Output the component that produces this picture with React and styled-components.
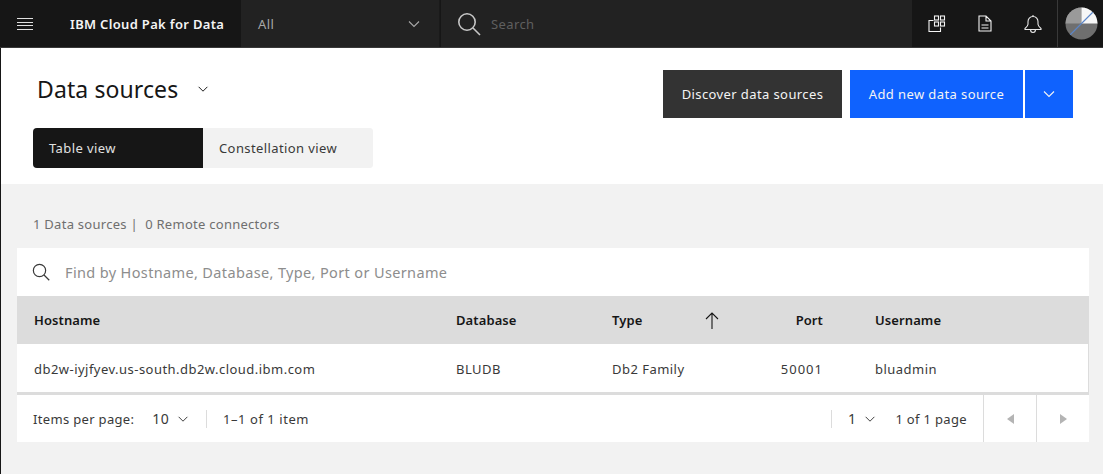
import React from "react";
import styled, { createGlobalStyle } from "styled-components";

const GlobalStyle = createGlobalStyle`
  html, body {
    margin: 0;
    padding: 0;
    background: #f2f2f2;
    font-family: "Noto Sans", "Liberation Sans", sans-serif;
    color: #161616;
  }
  * { box-sizing: border-box; }
`;

const Page = styled.div`
  width: 1103px;
  height: 474px;
  overflow: hidden;
  display: flex;
  flex-direction: column;
  letter-spacing: 0.4px;
`;

const TopBar = styled.header`
  height: 48px;
  display: flex;
  background: #161616;
  border-bottom: 1px solid #393939;
  flex-shrink: 0;
`;

const MenuButton = styled.div`
  width: 51px;
  display: flex;
  align-items: center;
  justify-content: center;
  padding-right: 1px;
`;

const Brand = styled.div`
  width: 190px;
  padding-left: 19px;
  display: flex;
  align-items: center;
  color: #f4f4f4;
  font-size: 13px;
  font-weight: 600;
  letter-spacing: 0.32px;
`;

const ScopeSelect = styled.div`
  width: 199px;
  background: #222;
  display: flex;
  align-items: center;
  justify-content: space-between;
  padding: 0 17px 0 17px;
  color: #a8a8a8;
  font-size: 13px;
  border-right: 1px solid #1a1a1a;
`;

const SearchBar = styled.div`
  width: 471px;
  margin-left: 1px;
  background: #222;
  display: flex;
  align-items: center;
  gap: 10px;
  padding-left: 16px;
  color: #5f5f5f;
  font-size: 13px;
`;

const IconGroup = styled.div`
  flex: 1;
  display: flex;
  align-items: center;
  padding-left: 1px;
`;

const HeaderIcon = styled.div`
  width: 48px;
  height: 47px;
  display: flex;
  align-items: center;
  justify-content: center;
`;

const AvatarSlot = styled.div`
  flex: 1;
  height: 47px;
  border-left: 1px solid #393939;
  display: flex;
  align-items: center;
  justify-content: center;
  padding-left: 1px;
`;

const Body = styled.div`
  flex: 1;
  border-left: 1px solid #161616;
  display: flex;
  flex-direction: column;
`;

const Hero = styled.section`
  height: 136px;
  background: #fff;
  padding: 22px 30px 0 32px;
  flex-shrink: 0;
`;

const HeroTop = styled.div`
  display: flex;
  justify-content: space-between;
  align-items: flex-start;
  height: 58px;
`;

const TitleRow = styled.div`
  display: flex;
  align-items: center;
  gap: 18px;
  height: 38px;
  padding-left: 4px;
`;

const Title = styled.h1`
  margin: 0;
  font-size: 23px;
  font-weight: 400;
  letter-spacing: 0.1px;
  color: #161616;
`;

const Actions = styled.div`
  display: flex;
`;

const ActionButton = styled.div`
  height: 48px;
  display: flex;
  align-items: center;
  justify-content: center;
  font-size: 13px;
  color: #f4f4f4;
  background: ${(p) => (p.$primary ? "#0f62fe" : "#333")};
  width: ${(p) => p.$width}px;
  margin-left: ${(p) => p.$gap}px;
`;

const Tabs = styled.div`
  display: flex;
  width: 340px;
  height: 40px;
  border-radius: 4px;
  overflow: hidden;
  background: #f2f2f2;
`;

const Tab = styled.div`
  width: 170px;
  display: flex;
  align-items: center;
  padding-left: 16px;
  font-size: 13px;
  background: ${(p) => (p.$active ? "#161616" : "#f2f2f2")};
  color: ${(p) => (p.$active ? "#e0e0e0" : "#393939")};
`;

const Content = styled.section`
  flex: 1;
  padding: 31px 14px 0 16px;
`;

const Summary = styled.div`
  padding-left: 16px;
  height: 33px;
  font-size: 13px;
  line-height: 18px;
  letter-spacing: 0.27px;
  color: #6f6f6f;
`;

const FindBar = styled.div`
  height: 48px;
  background: #fff;
  display: flex;
  align-items: center;
  gap: 15px;
  padding-left: 15px;
  font-size: 14.5px;
  letter-spacing: 0.36px;
  color: #8d8d8d;
`;

const Row = styled.div`
  display: grid;
  grid-template-columns: 422px 156px 123px 88px 1fr;
  align-items: center;
  height: 48px;
  padding-left: 17px;
  font-size: 13px;
`;

const HeadRow = styled(Row)`
  background: #dcdcdc;
  font-weight: 600;
  letter-spacing: 0.1px;
  color: #161616;
`;

const BodyRow = styled(Row)`
  background: #fff;
  color: #393939;
  letter-spacing: 0.47px;
  padding-top: 1px;
  border-right: 1px solid #dcdcdc;
`;

const TypeHead = styled.div`
  display: flex;
  align-items: center;
  justify-content: space-between;
  padding-right: 16px;
`;

const PortCell = styled.div`
  text-align: right;
  letter-spacing: ${(p) => (p.$digits ? "1px" : "inherit")};
`;

const UserCell = styled.div`
  padding-left: 52px;
`;

const Pager = styled.div`
  height: 50px;
  background: #fff;
  border-top: 3px solid #dcdcdc;
  display: flex;
  align-items: center;
  font-size: 13px;
  letter-spacing: 0.33px;
  color: #393939;
  padding-left: 16px;
`;

const PerPage = styled.div`
  display: flex;
  align-items: center;
  height: 18px;
`;

const Count = styled.span`
  margin-left: 16px;
  letter-spacing: 0.55px;
`;

const PageValue = styled.span`
  display: flex;
  align-items: center;
  gap: 7px;
  margin-left: ${(p) => p.$left}px;
  margin-right: ${(p) => p.$right}px;
  font-size: 14px;
`;

const PagerRule = styled.div`
  width: 1px;
  height: 18px;
  background: #dcdcdc;
`;

const PagerRight = styled.div`
  margin-left: auto;
  display: flex;
  align-items: center;
  height: 100%;
`;

const PageTotal = styled.span`
  margin-right: 16px;
  color: #393939;
`;

const ArrowButton = styled.div`
  width: 53px;
  height: 100%;
  border-left: 1px solid #dcdcdc;
  display: flex;
  align-items: center;
  justify-content: center;
`;

const Chevron = ({ color = "#161616", size = 16 }) => (
  <svg width={size} height={size} viewBox="0 0 16 16" fill="none">
    <path d="M3 5.5l5 5 5-5" stroke={color} strokeWidth="1.1" />
  </svg>
);

const Magnifier = ({ color, size }) => (
  <svg width={size} height={size} viewBox="0 0 24 24" fill="none">
    <circle cx="10" cy="10" r="8.2" stroke={color} strokeWidth="1.6" />
    <path d="M16 16l7 7" stroke={color} strokeWidth="1.6" />
  </svg>
);

const Hamburger = () => (
  <svg width="16" height="14" viewBox="0 0 16 14" fill="none" stroke="#e0e0e0" strokeWidth="1">
    <path d="M0 1.5h16M0 5.5h16M0 8.5h16M0 12.5h16" />
  </svg>
);

const CatalogIcon = () => (
  <svg width="18" height="18" viewBox="0 0 18 18" fill="none" stroke="#f4f4f4" strokeWidth="1.1">
    <path d="M5.5 5.5H1v11h11.5v-4" />
    <rect x="6.5" y="1" width="4" height="4" />
    <rect x="12.5" y="1" width="4" height="4" />
    <rect x="6.5" y="7" width="4" height="4" />
    <rect x="12.5" y="7" width="4" height="4" />
  </svg>
);

const DocumentIcon = () => (
  <svg width="14" height="17" viewBox="0 0 14 17" fill="none" stroke="#f4f4f4" strokeWidth="1.1">
    <path d="M1 1h7l5 5v10H1zM8 1v5h5M3.5 10h7M3.5 13h7" />
  </svg>
);

const BellIcon = () => (
  <svg width="18" height="20" viewBox="0 0 18 20" fill="none" stroke="#e8e8e8" strokeWidth="1.1">
    <path d="M9 2.5c-3.2 0-5 2.3-5 5.2v2.6c0 1.8-1 2.6-3 4.2v1h16v-1c-2-1.6-3-2.4-3-4.2V7.7c0-2.9-1.8-5.200-5-5.200z" />
    <path d="M9 1v1.5M6.500 15.500c0 2 1 3 2.500 3s2.500-1 2.500-3" />
  </svg>
);

const Avatar = () => (
  <svg width="33" height="33" viewBox="0 0 33 33">
    <clipPath id="avatar-disc">
      <circle cx="16.5" cy="16.5" r="16" />
    </clipPath>
    <g clipPath="url(#avatar-disc)">
      <rect width="33" height="33" fill="#6f6f6f" />
      <rect width="16.5" height="16.5" fill="#9a9a9a" />
      <rect x="16.5" width="16.5" height="16.5" fill="#f7f7f7" />
      <path d="M4 29L29 4" stroke="#5b86c8" strokeWidth="1.1" />
    </g>
  </svg>
);

const Triangle = ({ flip }) => (
  <svg width="7" height="10" viewBox="0 0 7 10">
    <path d={flip ? "M0 0l7 5-7 5z" : "M7 0L0 5l7 5z"} fill="#b4b4b4" />
  </svg>
);

const SortArrow = () => (
  <svg width="14" height="17" viewBox="0 0 14 17" fill="none" stroke="#161616" strokeWidth="1.1">
    <path d="M7 1v16M1 7l6-6 6 6" />
  </svg>
);

export default function App() {
  return (
    <Page>
      <GlobalStyle />
      <TopBar>
        <MenuButton>
          <Hamburger />
        </MenuButton>
        <Brand>IBM Cloud Pak for Data</Brand>
        <ScopeSelect>
          All
          <Chevron color="#a8a8a8" />
        </ScopeSelect>
        <SearchBar>
          <Magnifier color="#c6c6c6" size={24} />
          Search
        </SearchBar>
        <IconGroup>
          <HeaderIcon><CatalogIcon /></HeaderIcon>
          <HeaderIcon><DocumentIcon /></HeaderIcon>
          <HeaderIcon><BellIcon /></HeaderIcon>
          <AvatarSlot><Avatar /></AvatarSlot>
        </IconGroup>
      </TopBar>
      <Body>
        <Hero>
          <HeroTop>
            <TitleRow>
              <Title>Data sources</Title>
              <Chevron size={14} />
            </TitleRow>
            <Actions>
              <ActionButton $width={179}>Discover data sources</ActionButton>
              <ActionButton $primary $width={173} $gap={8}>Add new data source</ActionButton>
              <ActionButton $primary $width={48} $gap={2}>
                <Chevron color="#f4f4f4" />
              </ActionButton>
            </Actions>
          </HeroTop>
          <Tabs>
            <Tab $active>Table view</Tab>
            <Tab>Constellation view</Tab>
          </Tabs>
        </Hero>
        <Content>
          <Summary>1 Data sources |&nbsp; 0 Remote connectors</Summary>
          <FindBar>
            <Magnifier color="#393939" size={18} />
            Find by Hostname, Database, Type, Port or Username
          </FindBar>
          <HeadRow>
            <div>Hostname</div>
            <div>Database</div>
            <TypeHead>Type <SortArrow /></TypeHead>
            <PortCell>Port</PortCell>
            <UserCell>Username</UserCell>
          </HeadRow>
          <BodyRow>
            <div>db2w-iyjfyev.us-south.db2w.cloud.ibm.com</div>
            <div>BLUDB</div>
            <div>Db2 Family</div>
            <PortCell $digits>50001</PortCell>
            <UserCell>bluadmin</UserCell>
          </BodyRow>
          <Pager>
            <PerPage>
              Items per page:
              <PageValue $left={18} $right={16}>10 <Chevron color="#393939" size={14} /></PageValue>
              <PagerRule />
              <Count>1–1 of 1 item</Count>
            </PerPage>
            <PagerRight>
              <PagerRule />
              <PageValue $left={16} $right={18}>1 <Chevron color="#393939" size={14} /></PageValue>
              <PageTotal>1 of 1 page</PageTotal>
              <ArrowButton><Triangle /></ArrowButton>
              <ArrowButton><Triangle flip /></ArrowButton>
            </PagerRight>
          </Pager>
        </Content>
      </Body>
    </Page>
  );
}
